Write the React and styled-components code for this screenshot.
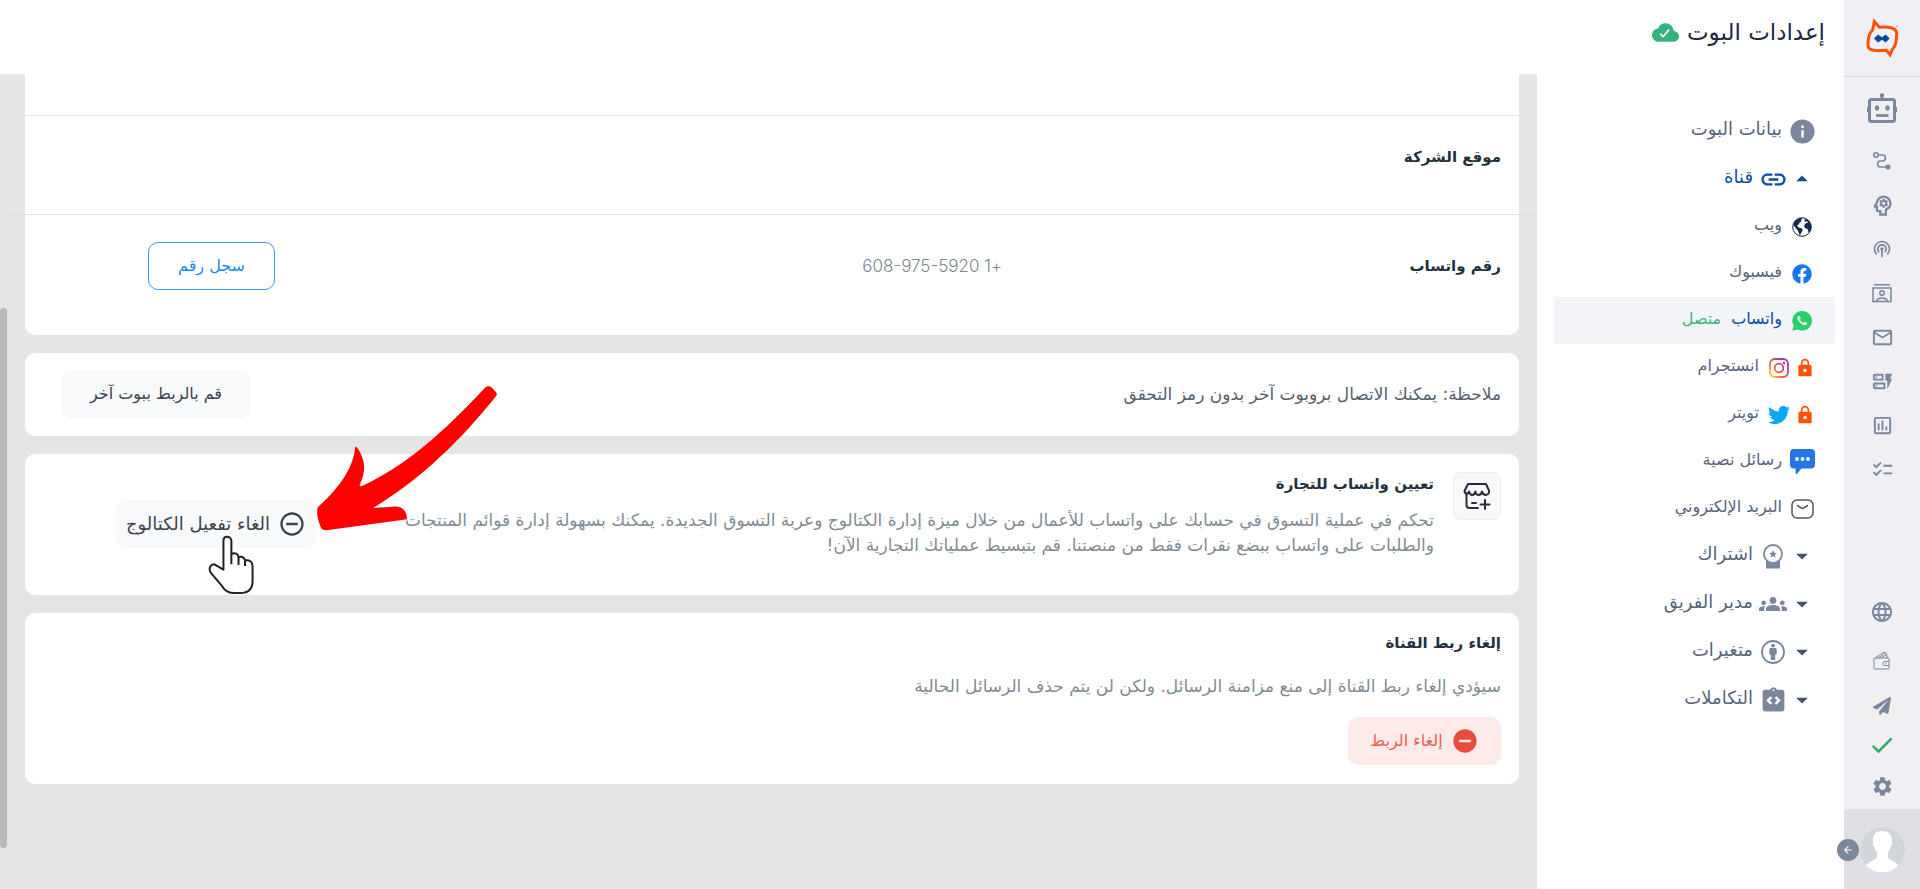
import React from 'react';
import styled, { createGlobalStyle, css } from 'styled-components';
import {
  MdOutlinePsychology, MdPodcasts, MdMailOutline, MdOutlineDynamicForm, MdOutlineInsertChart,
  MdChecklist, MdLanguage, MdCheck, MdSettings, MdInfo, MdLink, MdLock, MdGroups,
  MdIntegrationInstructions, MdArrowDropDown, MdArrowDropUp, MdRemoveCircle,
  MdRemoveCircleOutline, MdArrowBack,
} from 'react-icons/md';
import { FaFacebook, FaTwitter, FaPaperPlane } from 'react-icons/fa';
import { IoCloudDone } from 'react-icons/io5';

const GlobalStyle = createGlobalStyle`
  *, *::before, *::after { box-sizing: border-box; }
  body {
    margin: 0;
    background: #fff;
    color: #24303e;
    font-family: "DejaVu Sans", sans-serif;
    font-size: 17px;
    line-height: 24px;
  }
  a { color: inherit; text-decoration: none; }
  button { font: inherit; cursor: pointer; }
  svg { display: block; flex: none; }
  h1, h2, p { margin: 0; }
`;

const Shell = styled.div`
  display: flex;
  min-height: 100vh;
`;

/* Icon rail */
const Rail = styled.nav`
  display: flex;
  flex-direction: column;
  flex: none;
  width: 76px;
  background: #f0eff4;
  color: #7b879d;
`;

const RailLink = styled.a`
  display: flex;
  align-items: center;
  justify-content: center;
  height: ${(p) => p.$height || 44}px;
`;

const LogoLink = styled(RailLink)`
  border-bottom: 1px solid #d9d9de;
`;

const RailFooter = styled.div`
  margin-top: auto;
`;

const SendTile = styled.span`
  display: flex;
  align-items: center;
  justify-content: center;
  width: 40px;
  height: 30px;
  background: #f0f0f0;
`;

const Account = styled.div`
  position: relative;
  display: flex;
  align-items: center;
  justify-content: center;
  height: 80px;
  background: #dfe0e6;
`;

const CollapseButton = styled.button`
  position: absolute;
  right: 61px;
  top: 30px;
  display: flex;
  align-items: center;
  justify-content: center;
  width: 22px;
  height: 22px;
  padding: 0;
  border: 0;
  border-radius: 50%;
  background: #7b879d;
  color: #fff;
`;

/* Page frame */
const Page = styled.div`
  display: flex;
  flex-direction: column;
  flex: 1;
  min-width: 0;
`;

const Header = styled.header`
  display: flex;
  align-items: center;
  gap: 8px;
  height: 74px;
  padding: 0 19px 10px;
  color: #35b37e;
`;

const PageTitle = styled.h1`
  color: #1f2a3c;
  font-size: 23px;
  font-weight: 400;
  line-height: 32px;
`;

const Body = styled.div`
  display: flex;
  flex: 1;
`;

/* Settings navigation */
const SideNav = styled.nav`
  flex: none;
  width: 307px;
  padding: 33px 9px 24px 17px;
`;

const NavItem = styled.a`
  display: flex;
  align-items: center;
  height: ${(p) => (p.$sub ? 47 : 48)}px;
  padding-right: 21px;
  font-size: ${(p) => (p.$sub ? 16 : 18)}px;
  color: ${(p) => (p.$active ? '#0a4ea2' : '#56647c')};
  background: ${(p) => (p.$selected ? '#f3f5f9' : 'transparent')};
`;

const IconSlot = styled.span`
  display: flex;
  align-items: center;
  justify-content: center;
  width: ${(p) => (p.$narrow ? 18 : 24)}px;
  height: 24px;
  color: ${(p) => p.$color || '#7b879d'};
  & + & { margin-right: 5px; }
`;

const NavLabel = styled.span`
  margin-right: 8px;
  padding-bottom: 4px;
`;

const Connected = styled(NavLabel)`
  margin-right: 10px;
  color: #3cb57f;
`;

/* Content */
const Content = styled.main`
  display: flex;
  flex: 1;
  min-width: 0;
  background: #e5e5e5;
`;

const Cards = styled.div`
  display: flex;
  flex-direction: column;
  flex: 1;
  gap: 18px;
  min-width: 0;
  padding: 0 18px 24px;
`;

const ScrollTrack = styled.div`
  display: grid;
  grid-template-rows: 234fr 540fr 41fr;
  width: 7px;
`;

const ScrollThumb = styled.div`
  grid-row: 2;
  border-radius: 4px;
  background: #b8b8b8;
`;

const Card = styled.section`
  border-radius: 10px;
  background: #fff;
  padding: ${(p) => p.$padding || '18px'};
`;

const ProfileCard = styled(Card)`
  padding: 0;
  border-radius: 0 0 10px 10px;
`;

const ProfileRow = styled.div`
  display: grid;
  grid-template-columns: 499fr 727fr auto;
  align-items: center;
  margin: 0 -18px;
  padding: ${(p) => p.$padding};
  & + & { border-top: 1px solid #e2e2e3; }
`;

const CardTitle = styled.h2`
  font-size: 15px;
  font-weight: 700;
  line-height: 24px;
  color: #24303e;
`;

const Phone = styled.span`
  font-family: Inter, "Liberation Sans", sans-serif;
  font-weight: 300;
  color: #7d858e;
`;

const Muted = styled.p`
  line-height: 25px;
  color: #828b95;
`;

const Note = styled(Muted)`
  color: #56606c;
`;

const Split = styled.div`
  display: flex;
  align-items: ${(p) => p.$align || 'center'};
  justify-content: space-between;
`;

const tones = {
  plain: css`background: #f8f9fb; color: #3d444d; border: 0;`,
  outline: css`background: #fff; color: #1e88f5; border: 1px solid #3f98fa;`,
  danger: css`background: #ffeaea; color: #e9604f; border: 0;`,
};

const Button = styled.button`
  display: flex;
  align-items: center;
  justify-content: center;
  gap: 8px;
  flex: none;
  width: ${(p) => p.$width}px;
  height: 48px;
  padding: 0;
  border-radius: 10px;
  font-size: ${(p) => p.$size || 16}px;
  ${(p) => tones[p.$tone]}
`;

const CommerceIntro = styled.div`
  display: flex;
  gap: 19px;
`;

const CommerceText = styled.div`
  display: flex;
  flex-direction: column;
  gap: 12px;
`;

const IconTile = styled.span`
  display: flex;
  align-items: center;
  justify-content: center;
  flex: none;
  width: 48px;
  height: 48px;
  border: 1px solid #ececee;
  border-radius: 8px;
  background: #f9f9fa;
`;

const CommerceAction = styled.div`
  position: relative;
  flex: none;
  margin: 28px 0 0 73px;
`;

const Pointer = styled.span`
  position: absolute;
  pointer-events: none;
  z-index: 2;
  left: ${(p) => p.$left}px;
  top: ${(p) => p.$top}px;
`;

const Unlink = styled.div`
  display: flex;
  flex-direction: column;
  align-items: flex-start;
`;

const UnlinkText = styled(Muted)`
  margin: 19px 0 18px;
`;

/* Drawings */
const Logo = () => (
  <svg width="35" height="42" viewBox="985 50 105 125" fill="none">
    <path d="M1013 63 L1028 80 C1052 78 1080 80 1080 99 C1080 118 1076 140 1066 148 L1060 163 L1049 149 C1020 152 994 152 994 134 C994 112 998 96 1008 88 Z" stroke="#ff5200" strokeWidth="9" strokeLinejoin="miter" />
    <path d="M1024 102 L1036 110 L1047 102 L1059 114 L1047 126 L1036 118 L1024 126 L1012 114 Z" fill="#0a4b9c" />
    <circle cx="1081" cy="77" r="2" fill="#ff5200" />
  </svg>
);

const Robot = () => (
  <svg width="30" height="30" viewBox="0 0 30 30" fill="none" stroke="currentColor">
    <rect x="2.500" y="6.500" width="25" height="22" rx="2" strokeWidth="3" />
    <path d="M15 2v5M1.200 14v5M28.800 14v5" strokeWidth="2.400" />
    <circle cx="15" cy="2.500" r="2.200" fill="currentColor" stroke="none" />
    <ellipse cx="10" cy="15" rx="2.200" ry="2.700" fill="currentColor" stroke="none" />
    <ellipse cx="20.500" cy="15" rx="2.200" ry="2.700" fill="currentColor" stroke="none" />
    <path d="M9 22.500h12.500" strokeWidth="2.800" />
  </svg>
);

const Flow = () => (
  <svg width="20" height="20" viewBox="0 0 20 20" fill="none" stroke="currentColor" strokeWidth="1.500">
    <circle cx="4" cy="4" r="2.200" />
    <path d="M6.200 4h4.300a3 3 0 0 1 0 6H8.500a3 3 0 0 0 0 6H14" />
    <circle cx="16" cy="16" r="2.600" fill="currentColor" stroke="none" />
  </svg>
);

const ContactCard = () => (
  <svg width="20" height="20" viewBox="0 0 20 20" fill="none" stroke="currentColor" strokeWidth="1.500">
    <path d="M2 1.800h16" />
    <rect x="1" y="5" width="18" height="13.500" />
    <circle cx="10" cy="10" r="2.200" />
    <path d="M4.500 18c1.500-4 9.500-4 11 0" />
  </svg>
);

const Wallet = () => (
  <svg width="18" height="19" viewBox="0 0 18 19" fill="none" stroke="currentColor">
    <rect x="1" y="7" width="15" height="11" rx="1" />
    <path d="M2 7L11 1.200l2 .8 1.500 5M5 7l7-4.500M8 7l5-3M16 10.500h-4a2 2 0 0 0 0 4h4M12.500 12.500h1" />
  </svg>
);

const Avatar = () => (
  <svg width="45" height="45" viewBox="0 0 45 45">
    <circle cx="22.500" cy="22.500" r="22.500" fill="#d2d5d9" />
    <path d="M22 4c-7 0-9.500 5-9 11-.5 1 .2 4.500 1.300 5 .5 2.500 1.500 4 2.700 5v5c-1 3.500-8 4-11 8.500a22.500 22.500 0 0 0 32.500 0C36 34 29 33.500 28 30v-5c1.200-1.200 2-2.500 2.500-5 1-.5 1.800-4 1.300-5C32 9 30 4 22 4z" fill="#fff" />
  </svg>
);

const Earth = () => (
  <svg width="20" height="20" viewBox="0 0 20 20">
    <circle cx="10" cy="10" r="9.300" fill="#fff" stroke="#14284b" />
    <path d="M2 6C3.500 3 6 1.300 9.500.9l.8 1.300-1.500.8.7 1.500-2 1-.5 2L5 8l1.500 2.500 2.500.5 1.800 1.800-1.300 2.700-1.700 3-1.300-3.500L5 12.500 2.500 9.500 1.500 8zM12.500 2l2.800.5C18 4.500 19.500 7.500 19.300 11l-1 3-1.800 1.500-.8-3.500-2.700-.8-.9-2.700 1.600-2.300 2.300-.5-1-1.400-2.300.4z" fill="#14284b" />
  </svg>
);

const WhatsApp = () => (
  <svg width="20" height="20" viewBox="0 0 20 20">
    <path d="M10.200 0A9.700 9.700 0 0 0 1.800 14.800L.3 19.800l5.200-1.400A9.800 9.800 0 1 0 10.200 0z" fill="#25d366" />
    <path d="M7.600 5.300c-.3-.6-.8-.5-1.200-.2-1.800 1.600-.7 4.200.9 6 1.800 2 4.700 3.800 6.800 2.600.7-.4 1-1.400.9-1.700-.1-.3-1.800-1.200-2.200-1.200-.5 0-.8 1.200-1.300 1.200-1.300-.2-3.200-2-3.600-3.200 0-.5.900-.9.900-1.400z" fill="#fff" />
  </svg>
);

const Instagram = () => (
  <svg width="20" height="20" viewBox="0 0 20 20" fill="none" stroke="url(#insta)" strokeWidth="1.800">
    <defs>
      <linearGradient id="insta" gradientUnits="userSpaceOnUse" x1="1" y1="17" x2="18" y2="2">
        <stop offset="0" stopColor="#ffc933" />
        <stop offset=".45" stopColor="#f04a4a" />
        <stop offset="1" stopColor="#8d3ac0" />
      </linearGradient>
    </defs>
    <rect x="1" y="1" width="18" height="18" rx="5" />
    <circle cx="10" cy="10" r="4.300" />
    <circle cx="15" cy="5" r="1.200" fill="#b13ba0" stroke="none" />
  </svg>
);

const Sms = () => (
  <svg width="25" height="25" viewBox="0 0 25 25">
    <path d="M4 0h17a4 4 0 0 1 4 4v11.500a4 4 0 0 1-4 4h-9.500L7 24.700c-.8.600-1.500.2-1.500-.7v-4.500H4a4 4 0 0 1-4-4V4a4 4 0 0 1 4-4z" fill="#2575e6" />
    <g fill="#fff"><circle cx="7" cy="10" r="1.900" /><circle cx="12.500" cy="10" r="1.900" /><circle cx="18" cy="10" r="1.900" /></g>
  </svg>
);

const Envelope = () => (
  <svg width="23" height="20" viewBox="0 0 23 20" fill="none" stroke="#555" strokeWidth="1.500" strokeLinecap="round">
    <rect x="1" y="1" width="21" height="18" rx="5" />
    <path d="M6.500 6.500l3.500 2.300a3 3 0 0 0 3 0l3.500-2.300" />
  </svg>
);

const Award = () => (
  <svg width="20" height="25" viewBox="0 0 20 25">
    <path d="M3 16v8.500h14V16z" fill="currentColor" />
    <circle cx="10" cy="10" r="9" fill="#fff" stroke="currentColor" strokeWidth="1.800" />
    <path d="M10 6l1.100 2.700 2.900.2-2.200 1.900.7 2.900L10 12.100l-2.500 1.600.7-2.900L6 8.900l2.900-.2z" fill="currentColor" />
  </svg>
);

const Person = () => (
  <svg width="24" height="24" viewBox="0 0 24 24">
    <circle cx="12" cy="12" r="11" fill="none" stroke="currentColor" strokeWidth="1.800" />
    <circle cx="12" cy="5.600" r="1.900" fill="currentColor" />
    <path d="M9.800 8h4.400c1 0 1.500.6 1.500 1.500v5h-1.500V20H9.800v-5.500H8.300v-5C8.300 8.600 8.800 8 9.800 8z" fill="currentColor" />
  </svg>
);

const StorePlus = () => (
  <svg width="28" height="28" viewBox="0 0 28 28" fill="none" stroke="#2b2a3a" strokeWidth="2" strokeLinecap="round" strokeLinejoin="round">
    <path d="M5 2h18l3 6.500c.5 3-1.500 4.500-3.300 4.500S19.500 11.500 19 9.500C18.500 12 17 13 15.500 13s-3-1.500-3-3.500c-.5 2-1.500 3.500-3.300 3.500C7.500 13 6.500 11.500 6 9.500 5.500 12 2 12.500 1.500 9z" />
    <path d="M3.500 12v11a3 3 0 0 0 3 3H15M9 21h4M22 18v9M17.500 22.500h9" />
  </svg>
);

const Arrow = () => (
  <svg width="182" height="146" viewBox="885 102 510 438" preserveAspectRatio="none" aria-hidden="true">
    <path d="M1360 109Q1369 102 1378 110L1389 123Q1395 130 1388 137C1325 220 1215 360 1045 471L1100 467Q1140 464 1140 505L915 538Q901 539 897 525Q884 490 890 469Q988 375 995 289Q997 284 1001 291C1025 330 1025 360 1007 402Q1008 410 1020 402C1130 345 1220 265 1335 137Z" fill="#f00" />
  </svg>
);

const Hand = () => (
  <svg width="46" height="60" viewBox="582 555 128 182" preserveAspectRatio="none" aria-hidden="true">
    <path d="M625 660V572Q625 560 635 560T647 572V612Q664 606 667 622Q681 618 685 632Q706 630 706 650V695Q706 730 672 731H655Q632 731 622 711L590 670Q583 658 590 648Q598 640 607 649Z" fill="#fff" stroke="#222" strokeWidth="2" vectorEffect="non-scaling-stroke" strokeLinejoin="round" />
    <path d="M647 610V644M667 620V646M685 630V649" stroke="#222" strokeWidth="2" vectorEffect="non-scaling-stroke" />
  </svg>
);

const railItems = [
  ['المسار', <Flow />],
  ['الذكاء', <MdOutlinePsychology size={27} />],
  ['البث', <MdPodcasts size={20} />],
  ['جهات الاتصال', <ContactCard />],
  ['البريد', <MdMailOutline size={23} />],
  ['النماذج', <MdOutlineDynamicForm size={23} />],
  ['التقارير', <MdOutlineInsertChart size={23} />],
  ['المهام', <MdChecklist size={23} />],
];

const railFooterItems = [
  ['اللغة', <MdLanguage size={24} />, 46],
  ['المحفظة', <Wallet />, 50],
  ['إرسال', <SendTile><FaPaperPlane size={18} /></SendTile>, 42],
  ['الحالة', <MdCheck size={28} color="#27ae60" />, 36],
  ['الإعدادات', <MdSettings size={23} />, 46],
];

const Lock = () => <IconSlot $narrow $color="#ff5200"><MdLock size={20} /></IconSlot>;
const Down = () => <IconSlot $color="#44546f"><MdArrowDropDown size={28} /></IconSlot>;

export default function App() {
  return (
    <>
      <GlobalStyle />
      <Shell dir="rtl" lang="ar">
        <Rail>
          <LogoLink href="#home" aria-label="الرئيسية" $height={77}><Logo /></LogoLink>
          <RailLink href="#bot" aria-label="البوت" $height={62}><Robot /></RailLink>
          {railItems.map(([label, icon]) => (
            <RailLink key={label} href="#" aria-label={label}>{icon}</RailLink>
          ))}
          <RailFooter>
            {railFooterItems.map(([label, icon, height]) => (
              <RailLink key={label} href="#" aria-label={label} $height={height}>{icon}</RailLink>
            ))}
            <Account>
              <Avatar />
              <CollapseButton aria-label="طي القائمة"><MdArrowBack size={12} /></CollapseButton>
            </Account>
          </RailFooter>
        </Rail>

        <Page>
          <Header>
            <PageTitle>إعدادات البوت</PageTitle>
            <IoCloudDone size={27} />
          </Header>
          <Body>
            <SideNav>
              <NavItem href="#info"><IconSlot><MdInfo size={29} /></IconSlot><NavLabel>بيانات البوت</NavLabel></NavItem>
              <NavItem href="#channel" $active>
                <IconSlot $color="#0a4ea2"><MdArrowDropUp size={28} /></IconSlot>
                <IconSlot $color="#0a4ea2"><MdLink size={29} /></IconSlot>
                <NavLabel>قناة</NavLabel>
              </NavItem>
              <NavItem href="#web" $sub><IconSlot><Earth /></IconSlot><NavLabel>ويب</NavLabel></NavItem>
              <NavItem href="#facebook" $sub><IconSlot $color="#1877f2"><FaFacebook size={20} /></IconSlot><NavLabel>فيسبوك</NavLabel></NavItem>
              <NavItem href="#whatsapp" $sub $active $selected>
                <IconSlot><WhatsApp /></IconSlot><NavLabel>واتساب</NavLabel><Connected>متصل</Connected>
              </NavItem>
              <NavItem href="#instagram" $sub><Lock /><IconSlot><Instagram /></IconSlot><NavLabel>انستجرام</NavLabel></NavItem>
              <NavItem href="#twitter" $sub><Lock /><IconSlot $color="#03a9f4"><FaTwitter size={22} /></IconSlot><NavLabel>تويتر</NavLabel></NavItem>
              <NavItem href="#sms" $sub><IconSlot><Sms /></IconSlot><NavLabel>رسائل نصية</NavLabel></NavItem>
              <NavItem href="#email" $sub><IconSlot><Envelope /></IconSlot><NavLabel>البريد الإلكتروني</NavLabel></NavItem>
              <NavItem href="#subscription"><Down /><IconSlot><Award /></IconSlot><NavLabel>اشتراك</NavLabel></NavItem>
              <NavItem href="#team"><Down /><IconSlot><MdGroups size={28} /></IconSlot><NavLabel>مدير الفريق</NavLabel></NavItem>
              <NavItem href="#variables"><Down /><IconSlot><Person /></IconSlot><NavLabel>متغيرات</NavLabel></NavItem>
              <NavItem href="#integrations"><Down /><IconSlot><MdIntegrationInstructions size={29} /></IconSlot><NavLabel>التكاملات</NavLabel></NavItem>
            </SideNav>

            <Content>
              <Cards>
                <ProfileCard>
                  <ProfileRow $padding="41px 0 0" />
                  <ProfileRow $padding="29px 36px 45px"><CardTitle>موقع الشركة</CardTitle></ProfileRow>
                  <ProfileRow $padding="27px 36px 45px 141px">
                    <CardTitle>رقم واتساب</CardTitle>
                    <Phone>+1 608-975-5920</Phone>
                    <Button $tone="outline" $width={127}>سجل رقم</Button>
                  </ProfileRow>
                </ProfileCard>

                <Card $padding="17px 18px 18px 36px">
                  <Split>
                    <Note>ملاحظة: يمكنك الاتصال بروبوت آخر بدون رمز التحقق</Note>
                    <Button $tone="plain" $width={190}>قم بالربط ببوت آخر</Button>
                  </Split>
                </Card>

                <Card $padding="18px 18px 37px">
                  <Split $align="flex-start">
                    <CommerceIntro>
                      <IconTile><StorePlus /></IconTile>
                      <CommerceText>
                        <CardTitle>تعيين واتساب للتجارة</CardTitle>
                        <Muted>
                          تحكم في عملية التسوق في حسابك على واتساب للأعمال من خلال ميزة إدارة الكتالوج وعربة التسوق الجديدة. يمكنك بسهولة إدارة قوائم المنتجات
                          <br />
                          والطلبات على واتساب ببضع نقرات فقط من منصتنا. قم بتبسيط عملياتك التجارية الآن!
                        </Muted>
                      </CommerceText>
                    </CommerceIntro>
                    <CommerceAction>
                      <Button $tone="plain" $width={200} $size={18}><MdRemoveCircleOutline size={28} />الغاء تفعيل الكتالوج</Button>
                      <Pointer $left={200} $top={-115}><Arrow /></Pointer>
                      <Pointer $left={92} $top={35}><Hand /></Pointer>
                    </CommerceAction>
                  </Split>
                </Card>

                <Card $padding="18px 18px 19px">
                  <Unlink>
                    <CardTitle>إلغاء ربط القناة</CardTitle>
                    <UnlinkText>سيؤدي إلغاء ربط القناة إلى منع مزامنة الرسائل. ولكن لن يتم حذف الرسائل الحالية</UnlinkText>
                    <Button $tone="danger" $width={153}><MdRemoveCircle size={28} color="#e74c3c" />إلغاء الربط</Button>
                  </Unlink>
                </Card>
              </Cards>
              <ScrollTrack><ScrollThumb /></ScrollTrack>
            </Content>
          </Body>
        </Page>
      </Shell>
    </>
  );
}
